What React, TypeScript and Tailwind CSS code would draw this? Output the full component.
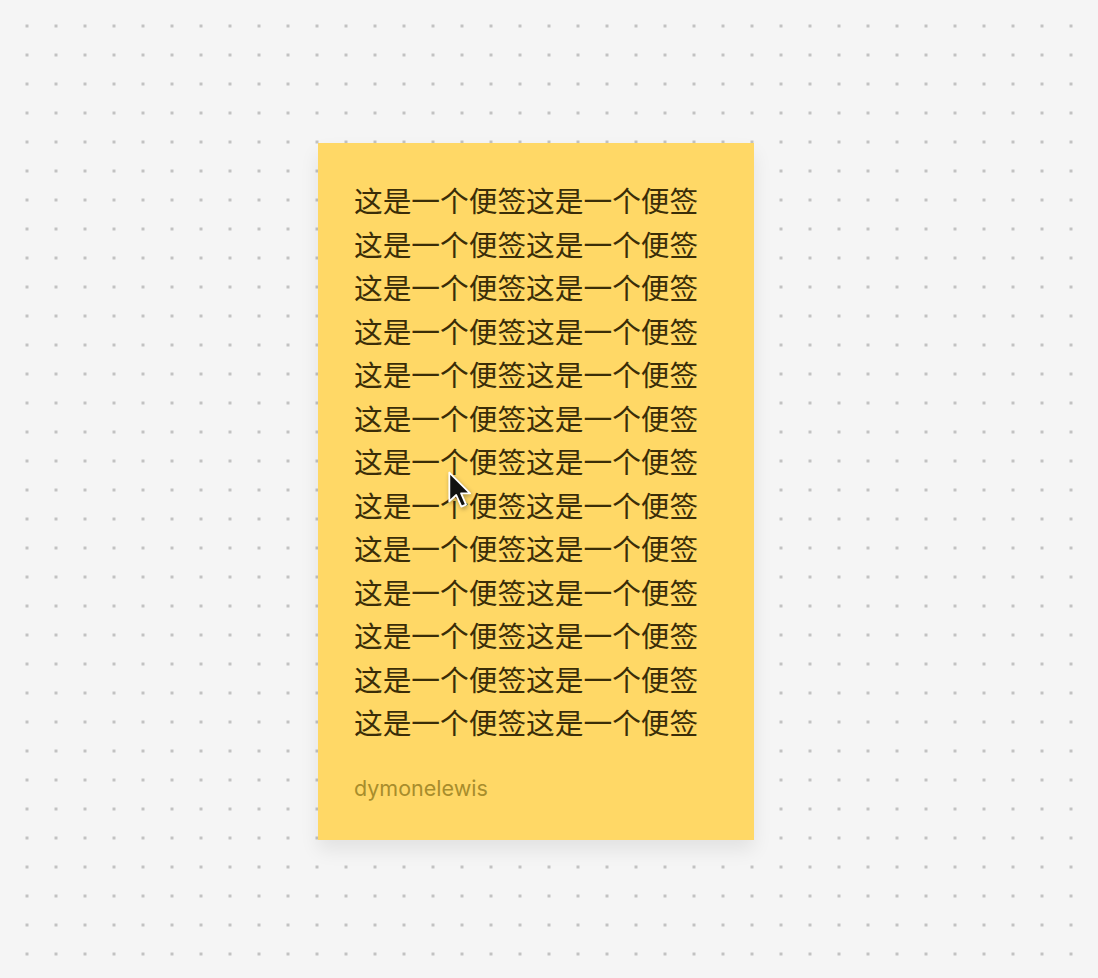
export default function App() {
  const lines = Array.from({ length: 13 }, () => "这是一个便签这是一个便签");

  return (
    <div className="relative h-[978px] w-full overflow-hidden bg-[#f5f5f5] bg-[radial-gradient(circle,#c2c2c2_1.4px,transparent_1.8px)] bg-[length:29px_29px] bg-[position:12.5px_11.5px] pl-[318px] pt-[143px]">
      <div className="flex h-[697px] w-[436px] flex-col bg-[#ffd866] pl-[36px] pt-[35px] shadow-[0_10px_18px_rgba(0,0,0,0.08)]">
        <div
          className="text-[28.7px] leading-[43.5px] text-[#3a2d08]"
          style={{ fontFamily: '"Noto Sans CJK SC", "Noto Sans", sans-serif' }}
        >
          {lines.map((line, i) => (
            <div key={i}>{line}</div>
          ))}
        </div>
        <div className="mt-[30px] text-[21.5px] leading-[28px] text-[#a88d2c]" style={{ fontFamily: "Inter, sans-serif" }}>
          dymonelewis
        </div>
      </div>

      <svg
        className="absolute left-[447px] top-[470px] drop-shadow-[1px_2px_2px_rgba(0,0,0,0.3)]"
        width="30"
        height="42"
        viewBox="0 0 26 36"
      >
        <path
          d="M2 2 L2 27 L8 21.5 L12.5 31.5 L16.5 29.8 L12.2 20 L20 20 Z"
          fill="#111"
          stroke="#fff"
          strokeWidth="1.6"
          strokeLinejoin="round"
        />
      </svg>
    </div>
  );
}
